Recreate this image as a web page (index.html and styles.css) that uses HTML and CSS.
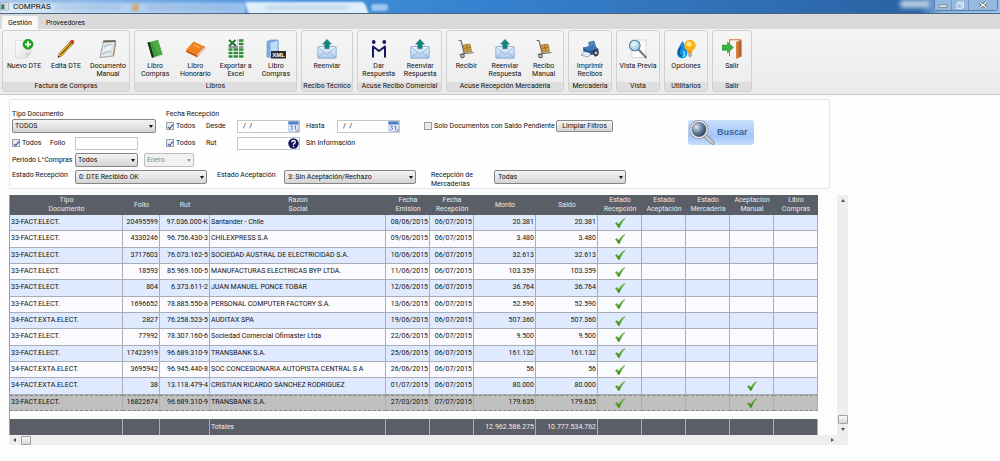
FILE: index.html
```html
<!DOCTYPE html>
<html lang="es">
<head>
<meta charset="utf-8">
<title>COMPRAS</title>
<link rel="stylesheet" href="styles.css">
</head>
<body>
<svg class="defs" aria-hidden="true">
  <defs>
    <linearGradient id="gTick" x1="0" y1="0" x2="0" y2="1"><stop offset="0" stop-color="#7cc53a"/><stop offset="1" stop-color="#2f8412"/></linearGradient>
    <linearGradient id="gEnv" x1="0" y1="0" x2="0" y2="1"><stop offset="0" stop-color="#eef5fd"/><stop offset="1" stop-color="#aac8ec"/></linearGradient>
    <linearGradient id="gPaper" x1="0" y1="0" x2="1" y2="1"><stop offset="0" stop-color="#ffffff"/><stop offset="1" stop-color="#dcdcdc"/></linearGradient>
    <linearGradient id="gDoor" x1="0" y1="0" x2="1" y2="0"><stop offset="0" stop-color="#d98a4c"/><stop offset="1" stop-color="#a9541d"/></linearGradient>
    <radialGradient id="gLens" cx=".4" cy=".35" r=".7"><stop offset="0" stop-color="#eefaff"/><stop offset="1" stop-color="#8cc4e4"/></radialGradient>
    <radialGradient id="gDark" cx=".35" cy=".35" r=".75"><stop offset="0" stop-color="#dbe4ee"/><stop offset=".5" stop-color="#5f7b9b"/><stop offset="1" stop-color="#12263f"/></radialGradient>
    <symbol id="tick" viewBox="0 0 10 10"><path d="M.3 5.6 2 4.500 3.800 6.600C5.200 4 7 1.700 9.600.4L9.900.8C7.500 3 5.800 6 4.400 9.600L3.200 9.600C2.500 8 1.600 6.600.3 5.600z" fill="url(#gTick)" stroke="#4c9f20" stroke-width=".5"/></symbol>
    <symbol id="mail" viewBox="0 0 20 20"><rect x=".8" y="7.5" width="18.4" height="11.7" rx=".8" fill="url(#gEnv)" stroke="#7fa3d3" stroke-width=".8"/><path d="M1 19 7.500 13.300M19 19 12.500 13.300M1 8 10 15.500 19 8" fill="none" stroke="#8fb0dc" stroke-width=".9"/><path d="M10 .3 14.500 5.200H12.200V9.800H7.800V5.200H5.500z" fill="#14857a" stroke="#0d6c63" stroke-width=".4"/></symbol>
    <symbol id="cart" viewBox="0 0 20 20"><path d="M2.500 1.500H5L8.300 14.500 17.500 13.500" fill="none" stroke="#6b6b6b" stroke-width="1.200"/><path d="M8 14.500 3.500 15.500" stroke="#777" stroke-width="1"/><circle cx="6.500" cy="17" r="1.700" fill="#ddd" stroke="#4d4d4d" stroke-width="1.100"/><path d="M7 6 14 5 15.500 12.300 8.600 13.300z" fill="#cfa143" stroke="#8d6a23" stroke-width=".6"/><path d="M7.800 9.400 14.800 8.400M10.500 5.500 12 12.800" stroke="#8d6a23" stroke-width=".8"/></symbol>
    <symbol id="cal" viewBox="0 0 11 11"><rect x=".8" y=".8" width="9.400" height="9.400" fill="#e9f0fa" stroke="#88a6cf" stroke-width=".6"/><rect x=".5" y=".5" width="10" height="3" fill="#4a7fc4"/><path d="M2.500 5H4.600L3.600 6.400Q5 6.800 4.500 8 3.700 9 2.400 8.400M6.500 5.600 7.600 4.900V8.800" fill="none" stroke="#3a6cb0" stroke-width=".9"/><path d="M10.500 7.500V10.500H7.500z" fill="#8f9fb5"/></symbol>
  </defs>
</svg>

<header class="titlebar">
  <div class="glass" aria-hidden="true">
    <span class="glass-tab glass-left"></span>
    <span class="smudge smudge-a"></span>
    <span class="smudge smudge-b"></span>
    <span class="smudge smudge-orange"></span>
    <span class="glass-tab glass-active"></span>
    <span class="smudge smudge-c"></span>
    <span class="glass-tab glass-new"></span>
    <span class="glass-tab glass-user"></span>
  </div>
  <svg class="app-icon" viewBox="0 0 10 10" aria-hidden="true"><rect x=".5" y="1" width="9" height="8" fill="#e9eef2" stroke="#8a99a6" stroke-width=".7"/><rect x="1.500" y="2.500" width="3.500" height="5.500" fill="#2f7a63"/><rect x="5.800" y="2.500" width="2.700" height="5.500" fill="#cfd9df"/></svg>
  <h1 class="title">COMPRAS</h1>
  <div class="win-buttons">
    <button type="button" aria-label="Minimizar"><svg viewBox="0 0 10 8"><rect x="1" y="4" width="8" height="2.200" fill="#fff" stroke="#55687e" stroke-width=".7"/></svg></button>
    <button type="button" aria-label="Restaurar"><svg viewBox="0 0 10 8"><rect x="3.500" y="1" width="5" height="5" fill="none" stroke="#dfeaf6" stroke-width="1"/><rect x="2" y="2.400" width="5" height="5" fill="#a9c4e2" stroke="#e8f0f9" stroke-width="1"/></svg></button>
    <button type="button" class="close" aria-label="Cerrar"><svg viewBox="0 0 10 8"><path d="M2 1.500 8 6.500M8 1.500 2 6.500" stroke="#4a5666" stroke-width="2.800"/><path d="M2 1.500 8 6.500M8 1.500 2 6.500" stroke="#fff" stroke-width="1.400"/></svg></button>
  </div>
</header>

<nav class="tabs">
  <button type="button" class="tab active">Gestión</button>
  <button type="button" class="tab">Proveedores</button>
</nav>

<div class="ribbon">
  <section class="group g-factura">
    <div class="tools">
      <button type="button" class="tool"><svg viewBox="0 0 20 20"><path d="M1.500 1.500H17V14L12.500 19H1.500z" fill="url(#gPaper)" stroke="#cfcfcf" stroke-width=".6"/><path d="M17 14 12.500 19V15.500Q12.500 14 14 14z" fill="#cfcfcf"/><circle cx="14" cy="5.300" r="5" fill="#1ea51e" stroke="#0e8510" stroke-width=".6"/><path d="M14 2.300V8.300M11 5.300H17" stroke="#fff" stroke-width="1.700"/></svg>Nuevo DTE</button>
      <button type="button" class="tool"><svg viewBox="0 0 20 20"><path d="M2 18.500 3.200 14.500 14.500 2 17.500 4.500 6 16.800z" fill="#f7b928" stroke="#7a4d10" stroke-width=".6"/><path d="M4.600 15.800 16 3.300" stroke="#2b2113" stroke-width="1"/><path d="M13.500 3.100 15.300 1Q16.700.4 18 1.600 18.800 2.800 17.800 4L16.500 5.600z" fill="#d0452f"/><path d="M2 18.500 2.600 16.500 4 17.700z" fill="#222"/></svg>Edita DTE</button>
      <button type="button" class="tool"><svg viewBox="0 0 20 20"><path d="M5.500 2 17.500 1.500 15 17 2 18.500z" fill="#dfe9ec" stroke="#76868c" stroke-width=".7"/><path d="M17.500 1.500 18.300 3 16 17.500 15 17z" fill="#b58a5c"/><path d="M5.500 1.500 17.500 1.200 17.300 3 5.200 3.400z" fill="#6e6350"/><path d="M5 13 13 4.500 16 5 6 16z" fill="#fff" opacity=".6"/><path d="M6 8Q10 5 14.500 6M4.500 15.500Q9 11 13.500 13" fill="none" stroke="#a9bfc6" stroke-width="1.200"/></svg>Documento Manual</button>
    </div>
    <h2>Factura de Compras</h2>
  </section>
  <section class="group g-libros">
    <div class="tools">
      <button type="button" class="tool"><svg viewBox="0 0 20 20"><path d="M2.500 3.500 13 1 17.500 15.500 7 19z" fill="#3f9b3a"/><path d="M2.500 3.500 4.500 3 9 18.300 7 19z" fill="#1c2a1c"/><path d="M7 19 17.500 15.500 17.700 16.500 7.500 19.800z" fill="#dcdcdc"/><path d="M13 1 17.500 15.500 13.500 16.800 7 2.500z" fill="#58b450" opacity=".6"/></svg>Libro Compras</button>
      <button type="button" class="tool"><svg viewBox="0 0 20 20"><path d="M8.500 2.500 19.500 7.500 12 16 1 11z" fill="#f0821e"/><path d="M1 11 12 16V18.300L1.200 13z" fill="#c14c10"/><path d="M12 16 19.500 7.500V9.700L12 18.300z" fill="#f3e4d0" stroke="#c45f1c" stroke-width=".5"/><path d="M9 6 14.500 8.500" stroke="#ffc07a" stroke-width="1.300"/></svg>Libro Honorario</button>
      <button type="button" class="tool"><svg viewBox="0 0 20 20"><path d="M2 .8H18V19.800H2z" fill="#fff"/><path d="M11.500 1.500H17.500M11.500 5H17.500" stroke="#2e8b3a" stroke-width="2.300"/><path d="M2.500 10.500H17.500M2.500 14H17.500M2.500 17.600H17.500" stroke="#2e8b3a" stroke-width="2.500"/><path d="M2.500 8H17.500" stroke="#333" stroke-width="1"/><path d="M7 9V19.800M12.500 0V19.800" stroke="#fff" stroke-width=".9"/><path d="M3 1 10 7M9.500 1 3 7" stroke="#1f7a2f" stroke-width="2.200"/></svg>Exportar a Excel</button>
      <button type="button" class="tool"><svg viewBox="0 0 20 20"><path d="M1 2.500 5 1H12V14L8 18H1z" fill="#7fb2e8" stroke="#4c83c0" stroke-width=".6"/><path d="M4 3.500 12 1V15L4 18.500z" fill="#bcdcf8" stroke="#5c92cc" stroke-width=".6"/><rect x="5" y="12" width="15" height="7.500" fill="#2d2d2d"/><text x="12.500" y="18" text-anchor="middle" class="xml">XML</text></svg>Libro Compras</button>
    </div>
    <h2>Libros</h2>
  </section>
  <section class="group g-tecnico">
    <div class="tools">
      <button type="button" class="tool"><svg><use href="#mail"/></svg>Reenviar</button>
    </div>
    <h2>Recibo Técnico</h2>
  </section>
  <section class="group g-comercial">
    <div class="tools">
      <button type="button" class="tool"><svg viewBox="0 0 20 20"><circle cx="4.700" cy="3" r="1.900" fill="#17175e"/><circle cx="15.300" cy="3" r="1.900" fill="#17175e"/><path d="M4 18.500V7.500L10 12 16 7.500V18.500" fill="none" stroke="#17175e" stroke-width="2" stroke-linejoin="round"/></svg>Dar Respuesta</button>
      <button type="button" class="tool"><svg><use href="#mail"/></svg>Reenviar Respuesta</button>
    </div>
    <h2>Acuse Recibo Comercial</h2>
  </section>
  <section class="group g-recepcion">
    <div class="tools">
      <button type="button" class="tool"><svg><use href="#cart"/></svg>Recibir</button>
      <button type="button" class="tool"><svg><use href="#mail"/></svg>Reenviar Respuesta</button>
      <button type="button" class="tool"><svg><use href="#cart"/></svg>Recibo Manual</button>
    </div>
    <h2>Acuse Recepción Mercaderia</h2>
  </section>
  <section class="group g-mercaderia">
    <div class="tools">
      <button type="button" class="tool"><svg viewBox="0 0 20 20"><path d="M8.500 3.500 14 2 16 9 10 10z" fill="#4d8ac8" stroke="#24568f" stroke-width=".6"/><path d="M3 8.500 14 6.500 18.500 10 17.500 15 8 16.500 3.500 12.500z" fill="#235391"/><path d="M3 8.500 14 6.500 18.500 10 8 12z" fill="#3b78bb"/><path d="M1 16 5 12.500 11 14.500 8 18z" fill="#e9f0f7" stroke="#5c7ea4" stroke-width=".6"/><path d="M12.500 12Q17 8 19 13 18.500 18 14.500 17.500z" fill="#33373e"/><circle cx="16" cy="14" r="1.400" fill="#c2c8d0"/></svg>Imprimir Recibos</button>
    </div>
    <h2>Mercaderia</h2>
  </section>
  <section class="group g-vista">
    <div class="tools">
      <button type="button" class="tool nowrap"><svg viewBox="0 0 20 20"><rect x="4" y="1" width="14" height="17.500" fill="#fcfcfc" stroke="#c9c9c9" stroke-width=".7"/><path d="M10.500 10.500 18.500 19" stroke="#6f7780" stroke-width="1.900"/><circle cx="6.800" cy="6.500" r="5.300" fill="url(#gLens)" stroke="#53809c" stroke-width="1.100"/></svg>Vista Previa</button>
    </div>
    <h2>Vista</h2>
  </section>
  <section class="group g-util">
    <div class="tools">
      <button type="button" class="tool"><svg viewBox="0 0 20 20"><path d="M6.500 2Q11.500 9 11.500 14 11 19.300 6 19.300 1 19 1 13.500 2 8.500 6.500 2z" fill="#178fdb"/><path d="M5 8Q2 12 3 15 4 17 6 17" fill="none" stroke="#0c4b97" stroke-width="1.500"/><path d="M7.500 12Q9.500 14.500 7.500 18" stroke="#5fe0fa" stroke-width="1.800" fill="none"/><circle cx="14" cy="6.500" r="5.700" fill="#fbb318"/><circle cx="13" cy="5" r="2.600" fill="#ffe680"/><path d="M11.500 11.500H16.500L15.800 14.500H12.200z" fill="#ee9a16"/><path d="M12.300 14.500H15.700V17L14 18.500 12.300 17z" fill="#a5a5a5"/></svg>Opciones</button>
    </div>
    <h2>Utilitarios</h2>
  </section>
  <section class="group g-salir">
    <div class="tools">
      <button type="button" class="tool"><svg viewBox="0 0 20 20"><path d="M7.500.8H19V5H7.500z" fill="#fbf5ee"/><path d="M7.500 17V.8H19" fill="none" stroke="#c07a48" stroke-width="1.100"/><path d="M14 3 19.500.8V17.500L14 20z" fill="url(#gDoor)"/><path d="M0 6H5.500V3L11.500 8.500 5.500 14V11.300H0z" fill="#3bb143" stroke="#239230" stroke-width=".5"/></svg>Salir</button>
    </div>
    <h2>Salir</h2>
  </section>
</div>

<main class="content">
  <form class="filters">
    <div class="rows">
      <div class="row row-labels">
        <label class="w-document" for="tipo">Tipo Documento</label>
        <span class="gap-check">Fecha Recepción</span>
      </div>
      <div class="row">
        <span class="select w-document"><select id="tipo"><option>TODOS</option></select></span>
        <label class="check gap-check"><input type="checkbox" checked>Todos</label>
        <label class="w-short" for="desde">Desde</label>
        <span class="field"><input id="desde" class="date" type="text" value="/  /"><svg viewBox="0 0 11 11" aria-hidden="true"><use href="#cal"/></svg></span>
        <label class="w-short gap-s" for="hasta">Hasta</label>
        <span class="field"><input id="hasta" class="date" type="text" value="/  /"><svg viewBox="0 0 11 11" aria-hidden="true"><use href="#cal"/></svg></span>
        <label class="check pending"><input type="checkbox">Solo Documentos con Saldo Pendiente</label>
        <button type="button" class="clear">Limpiar Filtros</button>
      </div>
      <div class="row">
        <label class="check"><input type="checkbox" checked>Todos</label>
        <label class="w-folio" for="folio">Folio</label>
        <span class="field"><input id="folio" type="text"></span>
        <label class="check gap-l"><input type="checkbox" checked>Todos</label>
        <label class="w-short" for="rut">Rut</label>
        <span class="field"><input id="rut" type="text"><svg viewBox="0 0 11 11" aria-hidden="true"><circle cx="5.500" cy="5.500" r="5.200" fill="#14145a"/><path d="M3.700 4.300Q3.700 2.500 5.500 2.500T7.300 4.200Q7.300 5.200 5.500 6V7" fill="none" stroke="#fff" stroke-width="1.300"/><circle cx="5.500" cy="8.500" r=".8" fill="#fff"/></svg></span>
        <span class="gap-s">Sin Información</span>
      </div>
      <div class="row">
        <label class="w-label" for="periodo">Periodo L°Compras</label>
        <span class="select w-label"><select id="periodo"><option>Todos</option></select></span>
        <span class="select w-month gap-s disabled"><select aria-label="Mes" disabled><option>Enero</option></select></span>
      </div>
      <div class="row row-states">
        <label class="w-label" for="recepcion">Estado Recepción</label>
        <span class="select w-state"><select id="recepcion"><option>0: DTE Recibido OK</option></select></span>
        <label class="w-accept gap-check" for="aceptacion">Estado Aceptación</label>
        <span class="select w-state"><select id="aceptacion"><option>3: Sin Aceptación/Rechazo</option></select></span>
        <label class="w-label gap-m two-line" for="mercaderias">Recepción de Mercaderias</label>
        <span class="select w-state"><select id="mercaderias"><option>Todas</option></select></span>
      </div>
    </div>
    <button type="button" class="search"><svg viewBox="0 0 26 26" aria-hidden="true"><path d="M15.500 15.500 23.500 22.500" stroke="#7e858c" stroke-width="4.200" stroke-linecap="round"/><path d="M15.500 15.500 23.500 22.500" stroke="#c9cdd1" stroke-width="2.600" stroke-linecap="round"/><circle cx="10" cy="9.500" r="8.200" fill="url(#gDark)" stroke="#6d747b" stroke-width="2.600"/><circle cx="10" cy="9.500" r="8.200" fill="none" stroke="#e6e8ea" stroke-width="1.600"/></svg>Buscar</button>
  </form>

  <div class="grid">
    <table class="data">
      <colgroup><col class="c-tipo"><col class="c-folio"><col class="c-rut"><col class="c-razon"><col class="c-std"><col class="c-std"><col class="c-money"><col class="c-money"><col class="c-std"><col class="c-std"><col class="c-std"><col class="c-std"><col class="c-std"></colgroup>
      <thead>
        <tr><th>Tipo<br>Documento</th><th>Folio</th><th>Rut</th><th>Razon<br>Social</th><th>Fecha<br>Emision</th><th>Fecha<br>Recepción</th><th>Monto</th><th>Saldo</th><th>Estado<br>Recepción</th><th>Estado<br>Aceptación</th><th>Estado<br>Mercaderia</th><th>Aceptacion<br>Manual</th><th>Libro<br>Compras</th></tr>
      </thead>
      <tbody>
        <tr><td>33-FACT.ELECT.</td><td>20495599</td><td>97.036.000-K</td><td>Santander - Chile</td><td>08/06/2015</td><td>06/07/2015</td><td>20.381</td><td>20.381</td><td><svg><use href="#tick"/></svg></td><td></td><td></td><td></td><td></td></tr>
        <tr><td>33-FACT.ELECT.</td><td>4330246</td><td>96.756.430-3</td><td>CHILEXPRESS S.A</td><td>09/06/2015</td><td>06/07/2015</td><td>3.480</td><td>3.480</td><td><svg><use href="#tick"/></svg></td><td></td><td></td><td></td><td></td></tr>
        <tr><td>33-FACT.ELECT.</td><td>3717603</td><td>76.073.162-5</td><td>SOCIEDAD AUSTRAL DE ELECTRICIDAD S.A.</td><td>10/06/2015</td><td>06/07/2015</td><td>32.613</td><td>32.613</td><td><svg><use href="#tick"/></svg></td><td></td><td></td><td></td><td></td></tr>
        <tr><td>33-FACT.ELECT.</td><td>18593</td><td>85.969.100-5</td><td>MANUFACTURAS ELECTRICAS BYP LTDA.</td><td>11/06/2015</td><td>06/07/2015</td><td>103.359</td><td>103.359</td><td><svg><use href="#tick"/></svg></td><td></td><td></td><td></td><td></td></tr>
        <tr><td>33-FACT.ELECT.</td><td>804</td><td>6.373.611-2</td><td>JUAN MANUEL PONCE TOBAR</td><td>12/06/2015</td><td>06/07/2015</td><td>36.764</td><td>36.764</td><td><svg><use href="#tick"/></svg></td><td></td><td></td><td></td><td></td></tr>
        <tr><td>33-FACT.ELECT.</td><td>1696652</td><td>78.885.550-8</td><td>PERSONAL COMPUTER FACTORY S.A.</td><td>13/06/2015</td><td>06/07/2015</td><td>52.590</td><td>52.590</td><td><svg><use href="#tick"/></svg></td><td></td><td></td><td></td><td></td></tr>
        <tr><td>34-FACT.EXTA.ELECT.</td><td>2827</td><td>76.258.523-5</td><td>AUDITAX SPA</td><td>19/06/2015</td><td>06/07/2015</td><td>507.360</td><td>507.360</td><td><svg><use href="#tick"/></svg></td><td></td><td></td><td></td><td></td></tr>
        <tr><td>33-FACT.ELECT.</td><td>77992</td><td>78.307.160-6</td><td>Sociedad Comercial Ofimaster Ltda</td><td>22/06/2015</td><td>06/07/2015</td><td>9.500</td><td>9.500</td><td><svg><use href="#tick"/></svg></td><td></td><td></td><td></td><td></td></tr>
        <tr><td>33-FACT.ELECT.</td><td>17423919</td><td>96.689.310-9</td><td>TRANSBANK S.A.</td><td>25/06/2015</td><td>06/07/2015</td><td>161.132</td><td>161.132</td><td><svg><use href="#tick"/></svg></td><td></td><td></td><td></td><td></td></tr>
        <tr><td>34-FACT.EXTA.ELECT.</td><td>3695942</td><td>96.945.440-8</td><td>SOC CONCESIONARIA AUTOPISTA CENTRAL S A</td><td>26/06/2015</td><td>06/07/2015</td><td>56</td><td>56</td><td><svg><use href="#tick"/></svg></td><td></td><td></td><td></td><td></td></tr>
        <tr><td>34-FACT.EXTA.ELECT.</td><td>38</td><td>13.118.479-4</td><td>CRISTIAN RICARDO SANCHEZ RODRIGUEZ</td><td>01/07/2015</td><td>06/07/2015</td><td>80.000</td><td>80.000</td><td><svg><use href="#tick"/></svg></td><td></td><td></td><td><svg><use href="#tick"/></svg></td><td></td></tr>
        <tr class="selected"><td>33-FACT.ELECT.</td><td>16822674</td><td>96.689.310-9</td><td>TRANSBANK S.A.</td><td>27/03/2015</td><td>07/07/2015</td><td>179.635</td><td>179.635</td><td><svg><use href="#tick"/></svg></td><td></td><td></td><td><svg><use href="#tick"/></svg></td><td></td></tr>
      </tbody>
      <tfoot>
        <tr class="spacer"><td colspan="13"></td></tr>
        <tr class="totals"><td></td><td></td><td></td><td>Totales</td><td></td><td></td><td>12.962.586.275</td><td>10.777.534.762</td><td></td><td></td><td></td><td></td><td></td></tr>
      </tfoot>
    </table>
    <div class="vscroll" aria-hidden="true"><i class="arrow up"></i><i class="thumb"></i><i class="arrow down"></i></div>
    <div class="hscroll" aria-hidden="true"><i class="arrow left"></i><i class="thumb"></i><i class="arrow right"></i></div>
  </div>
</main>
</body>
</html>
```
FILE: styles.css
```css
* { box-sizing: border-box; }

body {
  display: flex;
  flex-direction: column;
  height: 100vh;
  min-height: 461px;
  margin: 0;
  background: #fdfdfe;
  color: #111;
  font-family: Roboto, "Liberation Sans", sans-serif;
  font-size: 7px;
  line-height: 9px;
}

button, input, select { font: inherit; color: inherit; }
button { cursor: pointer; }
svg { display: block; flex: none; }
.defs { position: absolute; width: 0; height: 0; }

/* Title bar */
.titlebar {
  position: relative;
  display: flex;
  align-items: center;
  flex: none;
  height: 14px;
  overflow: hidden;
  border-bottom: 1px solid #4a6584;
  background: linear-gradient(90deg, #a9c8ea 0, #7fb0e6 12%, #5c9ce0 24%, #4590da 30%, #3580ce 50%, #3272b8 70%, #2a62a4 92%, #86b2e2 94%, #9cc2ec 100%);
}
.glass span { position: absolute; }
.glass-tab { border-radius: 3px; filter: blur(1px); }
.glass-left { left: 0; top: 3px; width: 245px; height: 12px; background: linear-gradient(90deg, #e2ecf6, #b9d4f2 40%, #9cc3f0); }
.glass-active { left: 247px; top: 2px; width: 120px; height: 14px; background: #e0f0fb; transform: skewX(20deg); }
.glass-new { left: 371px; top: 4px; width: 17px; height: 7px; background: #9cc6f1; }
.glass-user { left: 900px; top: 0; width: 30px; height: 8px; background: #b4cbe2; filter: blur(2px); }
.smudge { top: 6px; height: 3px; background: #6f95c4; opacity: .4; filter: blur(2px); }
.smudge-a { left: 55px; width: 66px; }
.smudge-b { left: 146px; width: 92px; }
.smudge-c { left: 265px; width: 84px; }
.smudge-orange { left: 132px; top: 4px; width: 7px; height: 7px; background: #d5a25c; opacity: .8; filter: blur(1px); }
.app-icon { position: relative; width: 9px; height: 9px; }
.title { position: relative; flex: 1; margin: 0 0 0 4px; font-size: 8px; font-weight: 400; }
.win-buttons { position: relative; display: flex; align-self: flex-start; margin-right: 2px; border: 1px solid #557ba6; border-top: 0; border-radius: 0 0 3px 3px; }
.win-buttons button { display: grid; place-items: center; width: 17px; height: 10px; padding: 0; border: 0; border-right: 1px solid #7396bf; background: #96b9e0; }
.win-buttons .close { width: 28px; border-right: 0; }
.win-buttons svg { width: 10px; height: 8px; }

/* Ribbon */
.tabs { display: flex; align-items: flex-end; flex: none; height: 16px; padding-left: 2px; background: #dadada; border-bottom: 1px solid #f6f6f6; }
.tab { height: 12px; padding: 0 8px; border: 0; background: none; line-height: 12px; }
.tab.active { height: 13px; padding: 0 6px; border-radius: 3px 3px 0 0; background: #f7f7f7; }

.ribbon { display: flex; gap: 4px; flex: none; padding: 0 2px 2px; border-bottom: 1px solid #c9c9c9; background: linear-gradient(#f4f4f4, #ebebeb); }
.group { display: flex; flex-direction: column; flex: none; border: 1px solid #d0d0d0; border-radius: 3px; background: linear-gradient(#f6f6f6, #ececec); overflow: hidden; }
.g-factura { width: 128px; }
.g-libros { width: 163px; }
.g-tecnico { width: 52px; }
.g-comercial { width: 85px; }
.g-recepcion { width: 118px; }
.g-mercaderia, .g-vista, .g-util { width: 44px; }
.g-salir { width: 40px; }
.tools { display: flex; flex: 1; }
.tool { display: flex; flex: 1 1 0; flex-direction: column; align-items: center; gap: 3px; width: 0; min-height: 51px; padding: 8px 2px 0; border: 0; background: none; line-height: 8px; text-align: center; }
.tool.nowrap { padding: 8px 0 0; white-space: nowrap; }
.tool svg { width: 20px; height: 20px; }
.xml { font: bold 6px "Liberation Sans", Arial, sans-serif; fill: #fff; }
.group h2 { margin: 0; background: #dedede; font-size: 7px; font-weight: 400; line-height: 9px; text-align: center; white-space: nowrap; }

/* Filters */
.content { display: flex; flex: 1; flex-direction: column; gap: 6px; max-width: 848px; min-height: 0; padding: 4px 0 16px 9px; }
.filters { display: flex; align-items: flex-start; flex: none; margin-right: 18px; padding: 10px 3px 0 2px; border: 1px solid #e0e7ee; border-radius: 2px; background: #fefefe; }
.rows { display: flex; flex-direction: column; gap: 3px; width: 676px; }
.row { display: flex; align-items: center; height: 14px; white-space: nowrap; }
.row-labels { height: 9px; margin-bottom: -3px; }
.row-states { height: 18px; align-items: flex-start; line-height: 9px; }
.row-states > label { padding-top: 1px; }
.w-document { width: 144px; }
.w-label { width: 63px; }
.w-short { width: 31px; }
.w-folio { width: 25px; }
.w-month { width: 50px; }
.w-state { width: 132px; }
.w-accept { width: 67px; }
.gap-s { margin-left: 6px; }
.gap-check { margin-left: 10px; }
.gap-m { margin-left: 15px; }
.gap-l { margin-left: 28px; }
.two-line { white-space: normal; padding-right: 12px; }

.check { display: flex; align-items: center; gap: 2px; width: 40px; }
.row > .check:first-child { width: 38px; }
.row > .pending { width: 132px; margin-left: 24px; }
.check input { position: relative; flex: none; width: 8px; height: 8px; margin: 0; appearance: none; border: 1px solid #9a9fa6; background: #e8ebf0; }
.check input:checked::after { content: ""; position: absolute; left: 2px; top: 0; width: 2px; height: 5px; border: solid #3450a0; border-width: 0 1px 1px 0; transform: rotate(40deg); }

.select { position: relative; display: block; }
.select select { display: block; width: 100%; height: 14px; padding: 0 12px 0 2px; appearance: none; border: 1px solid #858585; border-radius: 2px; background: linear-gradient(#f3f3f3, #e6e6e6 50%, #d4d4d4); }
.select::after { content: ""; position: absolute; right: 3px; top: 6px; border: solid transparent; border-width: 3px 2px 0; border-top-color: #111; pointer-events: none; }
.disabled select { border-color: #bcbcbc; background: #f1f1f1; color: #8c8c8c; opacity: 1; }
.disabled::after { border-top-color: #999; }
.w-state select { padding-left: 3px; }

.field { display: flex; align-items: center; width: 63px; height: 13px; border: 1px solid #c3c6cb; background: #fff; }
.field input { flex: 1; min-width: 0; height: 11px; padding: 0 2px; border: 0; background: none; outline: 0; }
.field .date { padding-left: 5px; white-space: pre; }
.field svg { width: 11px; height: 11px; }
.clear { width: 57px; height: 12px; padding: 0; border: 1px solid #8a8a8a; border-radius: 2px; background: linear-gradient(#f5f5f5, #d6d6d6); line-height: 10px; }
.search { display: flex; align-items: center; gap: 2px; height: 25px; margin-top: 10px; padding: 0 6px 0 1px; border: 0; border-radius: 3px; background: linear-gradient(#cbdffb, #a3c6fa 65%, #c8ddfb); color: #3a6598; font-family: "Liberation Sans", Arial, sans-serif; font-size: 9px; font-weight: 700; }
.search svg { width: 26px; height: 26px; }

/* Data grid */
.grid { display: grid; flex: 1; grid-template-columns: 1fr 11px; grid-template-rows: 1fr 10px; min-height: 0; }
.data { width: 808px; height: 100%; border-collapse: separate; border-spacing: 0; table-layout: fixed; border-left: 1px solid #9c9fa4; }
.c-tipo { width: 113px; }
.c-folio { width: 37px; }
.c-rut { width: 50px; }
.c-razon { width: 176px; }
.c-std { width: 44px; }
.c-money { width: 62px; }
.data th { height: 20px; padding: 0; background: #595e67; color: #e9e9ea; font-weight: 400; line-height: 9px; text-align: center; }
.data td { height: 16px; padding: 0 1px; overflow: hidden; border-right: 1px solid #a9adb5; border-bottom: 1px solid #a9adb5; background: #fbfaff; line-height: 9px; text-align: right; white-space: nowrap; }
.data td:first-child, .data td:nth-child(4) { text-align: left; }
.data tbody tr:nth-child(odd) td { background: #dfeafe; }
.data tbody .selected td { border-top: 1px dashed #858585; border-bottom: 1px dashed #858585; background: #c0c0c0; }
.data td svg { width: 10px; height: 10px; margin: 0 auto; }
.data .spacer td { height: 8px; border: 0; background: #fdfdfe; }
.data .totals td { border-bottom: 0; background: #595e67; color: #f0f0f0; }

.vscroll, .hscroll { display: flex; align-items: center; background: #eeeeee; }
.vscroll { flex-direction: column; padding: 4px 0; }
.vscroll .thumb { margin: auto 0 4px; }
.hscroll { grid-column: 1 / -1; padding: 0 14px 0 4px; }
.hscroll .thumb { margin: 0 auto 0 5px; }
.thumb { width: 10px; height: 9px; border: 1px solid #a0a0a0; border-radius: 1px; background: linear-gradient(#fafafa, #d8d8d8); }
.arrow { border: 2px solid transparent; }
.up { border-top: 0; border-bottom: 3px solid #555; }
.down { border-bottom: 0; border-top: 3px solid #555; }
.left { border-left: 0; border-right: 3px solid #555; }
.right { border-right: 0; border-left: 3px solid #555; }
```
